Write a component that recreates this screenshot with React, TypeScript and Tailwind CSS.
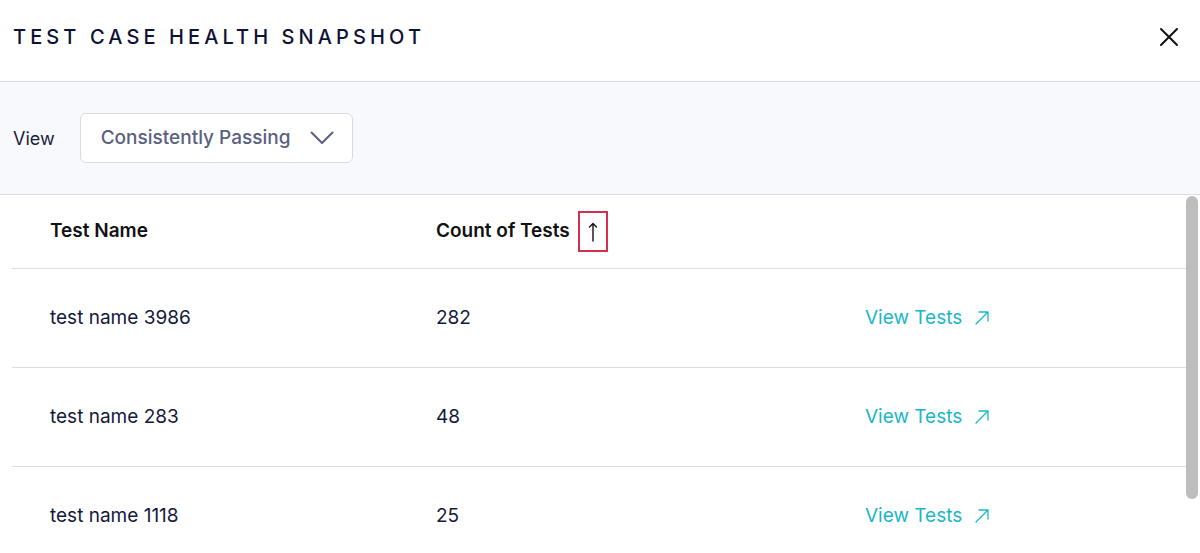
import React from "react";

const rows = [
  { name: "test name 3986", count: "282" },
  { name: "test name 283", count: "48" },
  { name: "test name 1118", count: "25" },
];

export default function App() {
  return (
    <div className="w-[1200px] h-[553px] overflow-hidden bg-white flex flex-col" style={{ fontFamily: "Inter, 'Noto Sans', sans-serif" }}>
      <div className="h-[82px] shrink-0 flex items-center justify-between pl-[13px] pr-[21px] pb-[8px] border-b border-[#dcdee6]">
        <h1 className="text-[20px] font-medium tracking-[0.205em] text-[#0e1236]">TEST CASE HEALTH SNAPSHOT</h1>
        <svg width="20" height="20" viewBox="0 0 20 20" fill="none" stroke="#111" strokeWidth="2" strokeLinecap="round">
          <path d="M2 2 L18 18 M18 2 L2 18" />
        </svg>
      </div>
      <div className="h-[113px] shrink-0 bg-[#f8f9fd] border-b border-[#dcdee6] flex items-center pl-[13px] gap-[25px]">
        <span className="text-[18px] text-[#1a1d33]">View</span>
        <div className="w-[273px] h-[50px] bg-white border border-[#d9dbe4] rounded-[6px] flex items-center justify-between pl-[20px] pr-[18px]">
          <span className="text-[19px] font-medium text-[#5a607f]">Consistently Passing</span>
          <svg width="24" height="14" viewBox="0 0 24 14" fill="none" stroke="#5a607f" strokeWidth="2" strokeLinecap="round" strokeLinejoin="round">
            <path d="M1.5 1.5 L12 12 L22.5 1.5" />
          </svg>
        </div>
      </div>
      <div className="flex flex-1 min-h-0">
        <div className="flex-1 pl-[12px]">
          <div className="h-[74px] flex items-center border-b border-[#dcdee6] text-[19px] font-semibold text-[#111]">
            <div className="w-[424px] pl-[38px]">Test Name</div>
            <div className="flex items-center gap-[8px]">
              <span>Count of Tests</span>
              <span className="w-[30px] h-[41px] border-2 border-[#d1304f] flex items-center justify-center">
                <svg width="10" height="20" viewBox="0 0 10 20" fill="none" stroke="#111" strokeWidth="1.4" strokeLinecap="round" strokeLinejoin="round">
                  <path d="M5 19 V1.5 M1.5 5 L5 1.5 L8.5 5" />
                </svg>
              </span>
            </div>
          </div>
          {rows.map((r, i) => (
            <div key={i} className="h-[99px] flex items-center border-b border-[#dcdee6] text-[19px] text-[#14183a]">
              <div className="w-[424px] pl-[38px]">{r.name}</div>
              <div className="w-[429px]">{r.count}</div>
              <div className="flex items-center gap-[13px] text-[#1bb6c9]">
                <span>View Tests</span>
                <svg width="14" height="14" viewBox="0 0 14 14" fill="none" stroke="#1bb6c9" strokeWidth="1.3" strokeLinecap="round" strokeLinejoin="round">
                  <path d="M1 13 L13 1 M4 1 H13 V10" />
                </svg>
              </div>
            </div>
          ))}
        </div>
        <div className="w-[14px] pr-[2px] pt-[1px]">
          <div className="w-[12px] h-[303px] bg-[#bdbdbd] rounded-full" />
        </div>
      </div>
    </div>
  );
}
